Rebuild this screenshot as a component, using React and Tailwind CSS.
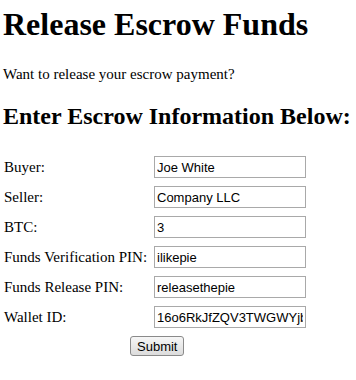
const rows = [
  ["Buyer:", "Joe White"],
  ["Seller:", "Company LLC"],
  ["BTC:", "3"],
  ["Funds Verification PIN:", "ilikepie"],
  ["Funds Release PIN:", "releasethepie"],
  ["Wallet ID:", "16o6RkJfZQV3TWGWYjbX"],
];

export default function App() {
  return (
    <div className="w-[356px] h-[380px] bg-white text-black px-[3px] pt-[6px] font-['Liberation_Serif',serif] overflow-hidden">
      <h1 className="text-[32px] font-bold leading-[36px]">Release Escrow Funds</h1>
      <p className="text-[15px] mt-[23px] leading-[18px]">Want to release your escrow payment?</p>
      <h2 className="text-[24px] font-bold leading-[28px] mt-[19px]">Enter Escrow Information Below:</h2>
      <div className="mt-[26px] flex flex-col gap-[8px]">
        {rows.map(([label, value]) => (
          <div key={label} className="flex items-center h-[22px]">
            <span className="w-[151px] text-[15px] leading-[22px] pl-[1px]">{label}</span>
            <input
              readOnly
              value={value}
              className="w-[152px] h-[22px] border border-[#a9a9a9] px-[2px] text-[13px] font-['Liberation_Sans',sans-serif] bg-white"
            />
          </div>
        ))}
      </div>
      <div className="pl-[127px] mt-[6px]">
        <button className="h-[20px] px-[6px] text-[13px] font-['Liberation_Sans',sans-serif] border border-[#8a8a8a] rounded-[3px] bg-gradient-to-b from-[#f6f6f6] to-[#dcdcdc]">
          Submit
        </button>
      </div>
    </div>
  );
}
